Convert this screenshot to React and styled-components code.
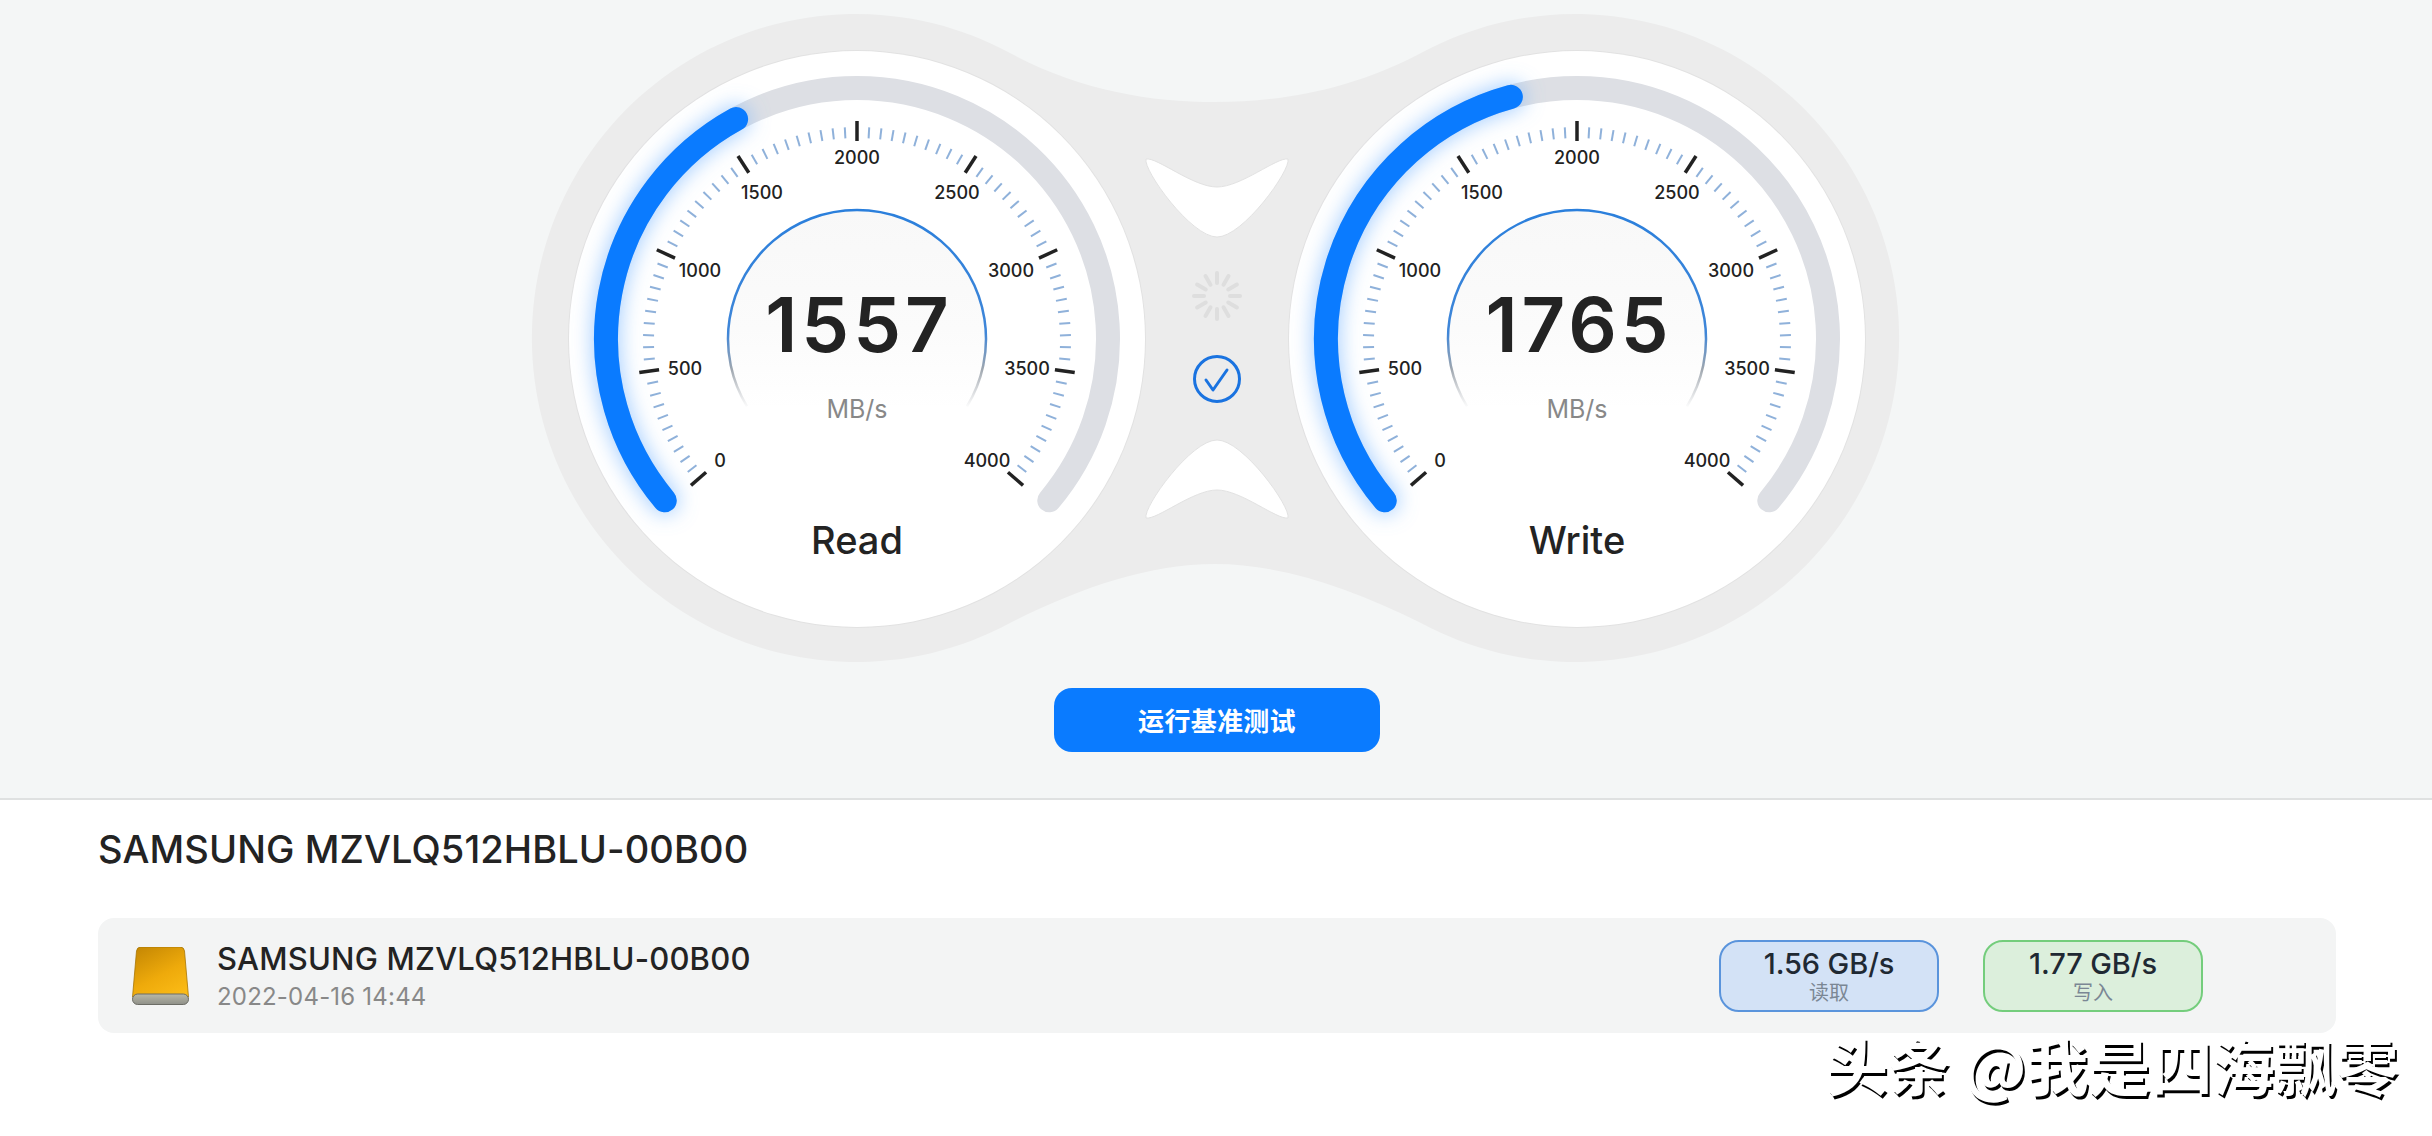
import React from 'react';
import styled, { createGlobalStyle } from 'styled-components';

const GlobalStyle = createGlobalStyle`
  html, body {
    margin: 0;
    padding: 0;
    background: #fff;
  }
  body {
    font-family: Inter, "Noto Sans CJK SC", sans-serif;
    color: #222;
  }
`;

const Page = styled.div`
  position: relative;
  width: 2432px;
  height: 1136px;
  overflow: hidden;
  background: #fff;
`;

const BenchPanel = styled.section`
  height: 800px;
  box-sizing: border-box;
  padding-top: 14px;
  background: #f4f6f6;
  border-bottom: 2px solid #dfe1e1;
  display: flex;
  flex-direction: column;
  align-items: center;
`;

const Stage = styled.div`
  position: relative;
  width: 1366px;
  height: 648px;
  box-sizing: border-box;
  padding: 37px 36px 0;
  display: grid;
  grid-template-columns: 576px 1fr 576px;
  align-items: start;
`;

const Backdrop = styled.svg`
  position: absolute;
  left: 0;
  top: 0;
  overflow: visible;
`;

const GaugeFace = styled.div`
  position: relative;
  width: 576px;
  height: 576px;
  box-sizing: border-box;
  border-radius: 50%;
  background: #fff;
  box-shadow: 0 0 0 1px #e2e2e2;
`;

const GaugeArt = styled.svg`
  display: block;
  width: 576px;
  height: 576px;
`;

const TickLabel = styled.text`
  font-family: Inter, sans-serif;
  font-size: 18px;
  font-weight: 500;
  fill: #222;
  text-anchor: middle;
  dominant-baseline: central;
`;

const Readout = styled.div`
  position: absolute;
  inset: 0;
  display: flex;
  flex-direction: column;
  align-items: center;
  padding-top: 236px;
`;

const Value = styled.div`
  padding-left: 4px;
  font-size: 76px;
  line-height: 74px;
  font-weight: 600;
  letter-spacing: 4px;
  color: #232323;
`;

const Unit = styled.div`
  margin-top: 33px;
  font-size: 25px;
  line-height: 30px;
  color: #888;
`;

const GaugeTitle = styled.div`
  margin-top: 93px;
  font-size: 38px;
  line-height: 46px;
  font-weight: 500;
  color: #232323;
`;

const Middle = styled.div`
  position: relative;
  display: flex;
  flex-direction: column;
  align-items: center;
  padding-top: 107px;
`;

const Notch = styled.svg`
  display: block;
`;

const Spinner = styled.svg`
  display: block;
  margin-top: 32px;
`;

const CheckMark = styled.svg`
  display: block;
  margin-top: 33px;
`;

const LowerNotch = styled(Notch)`
  margin-top: 36px;
`;

const RunButton = styled.button`
  margin: 26px 0 0 2px;
  width: 326px;
  height: 64px;
  padding: 0 0 2px;
  border: 0;
  border-radius: 18px;
  background: #0a7bff;
  color: #fff;
  font-family: "Noto Sans CJK SC", sans-serif;
  font-size: 26px;
  font-weight: 700;
  letter-spacing: 0.3px;
`;

const DriveSection = styled.section`
  padding: 26px 96px 0 98px;
`;

const DriveHeading = styled.h1`
  margin: 0;
  font-size: 38px;
  line-height: 46px;
  font-weight: 500;
  letter-spacing: 0.1px;
  color: #232323;
`;

const ResultRow = styled.div`
  margin-top: 46px;
  height: 115px;
  box-sizing: border-box;
  padding: 0 133px 0 34px;
  display: flex;
  align-items: center;
  background: #f3f4f4;
  border-radius: 16px;
`;

const DriveMeta = styled.div`
  margin-left: 28px;
  flex: 1;
`;

const DriveName = styled.div`
  font-size: 31px;
  line-height: 38px;
  font-weight: 500;
  letter-spacing: 0.2px;
  color: #232323;
`;

const DriveDate = styled.div`
  margin-top: 5px;
  font-size: 24px;
  line-height: 28px;
  letter-spacing: 0.2px;
  color: #888;
`;

const SpeedPill = styled.div`
  width: 220px;
  height: 72px;
  box-sizing: border-box;
  margin-left: ${({ $gap }) => $gap}px;
  padding-top: 6px;
  border: 2px solid ${({ $line }) => $line};
  border-radius: 20px;
  background: ${({ $fill }) => $fill};
  display: flex;
  flex-direction: column;
  align-items: center;
`;

const PillValue = styled.div`
  font-size: 29px;
  line-height: 32px;
  font-weight: 500;
  letter-spacing: -0.1px;
  color: #1f2933;
`;

const PillLabel = styled.div`
  margin-top: 1px;
  font-family: "Noto Sans CJK SC", sans-serif;
  font-size: 20px;
  line-height: 22px;
  color: #7b8794;
`;

const Watermark = styled.div`
  position: absolute;
  left: 1826px;
  top: 1029px;
  font-family: "Noto Sans CJK SC", sans-serif;
  font-size: 62px;
  font-weight: 700;
  line-height: 70px;
  white-space: nowrap;
  color: #fff;
  text-shadow: 2px 3px 0 #000;
`;

const SCALE = [
  { label: '0', x: -137, y: 121 },
  { label: '500', x: -172, y: 29 },
  { label: '1000', x: -157, y: -69 },
  { label: '1500', x: -95, y: -147 },
  { label: '2000', x: 0, y: -182 },
  { label: '2500', x: 100, y: -147 },
  { label: '3000', x: 154, y: -69 },
  { label: '3500', x: 170, y: 29 },
  { label: '4000', x: 130, y: 121 },
];

const polar = (r, deg) => {
  const a = (deg * Math.PI) / 180;
  return [r * Math.sin(a), -r * Math.cos(a)];
};

const arc = (r, from, to) => {
  const [x1, y1] = polar(r, from);
  const [x2, y2] = polar(r, to);
  const large = to - from > 180 ? 1 : 0;
  return `M ${x1} ${y1} A ${r} ${r} 0 ${large} 1 ${x2} ${y2}`;
};

const valueAngle = (v) => -130 + (v / 4000) * 260;

// the tick ring sits a little lower than the arc in the reference
const Ticks = () => {
  const out = [];
  for (let i = 0; i <= 80; i++) {
    const major = i % 10 === 0;
    const deg = -131 + i * 3.275;
    const [x1, y1] = polar(major ? 220 : 214, deg);
    const [x2, y2] = polar(major ? 200 : 203, deg);
    out.push(
      <line
        key={i}
        x1={x1}
        y1={y1 + 2}
        x2={x2}
        y2={y2 + 2}
        stroke={major ? '#222' : '#8fb1da'}
        strokeWidth={major ? 3.5 : 2}
      />
    );
  }
  return out;
};

const Gauge = ({ id, title, value }) => (
  <GaugeFace>
    <GaugeArt viewBox="-288 -288 576 576">
      <defs>
        <filter id={`${id}-glow`} x="-30%" y="-30%" width="160%" height="160%">
          <feGaussianBlur stdDeviation="10" />
        </filter>
        <linearGradient id={`${id}-ring`} gradientUnits="userSpaceOnUse" x1="0" y1="-130" x2="0" y2="70">
          <stop offset="0" stopColor="#2a7fdc" />
          <stop offset="0.62" stopColor="#3f86d8" />
          <stop offset="0.8" stopColor="#9ea6af" />
          <stop offset="1" stopColor="#b5b8bc" stopOpacity="0" />
        </linearGradient>
        <linearGradient id={`${id}-well`} gradientUnits="userSpaceOnUse" x1="0" y1="-130" x2="0" y2="70">
          <stop offset="0" stopColor="#f8f8f8" />
          <stop offset="0.6" stopColor="#fbfbfb" />
          <stop offset="1" stopColor="#ffffff" />
        </linearGradient>
      </defs>
      <path d={arc(251, -130, 130)} fill="none" stroke="#dddfe4" strokeWidth="24" strokeLinecap="round" />
      <path
        d={arc(251, -130, valueAngle(value))}
        fill="none"
        stroke="#6eb0ff"
        strokeOpacity="0.6"
        strokeWidth="28"
        strokeLinecap="round"
        filter={`url(#${id}-glow)`}
      />
      <path d={arc(251, -130, valueAngle(value))} fill="none" stroke="#0a7bff" strokeWidth="24" strokeLinecap="round" />
      <Ticks />
      <path d={arc(129, -121.5, 121.5)} fill={`url(#${id}-well)`} stroke={`url(#${id}-ring)`} strokeWidth="2.5" />
      {SCALE.map((s) => (
        <TickLabel key={s.label} x={s.x} y={s.y}>
          {s.label}
        </TickLabel>
      ))}
    </GaugeArt>
    <Readout>
      <Value>{value}</Value>
      <Unit>MB/s</Unit>
      <GaugeTitle>{title}</GaugeTitle>
    </Readout>
  </GaugeFace>
);

const BusySpinner = () => (
  <Spinner width="52" height="52" viewBox="-26 -26 52 52">
    {Array.from({ length: 12 }, (_, i) => (
      <line
        key={i}
        x1="0"
        y1="-13"
        x2="0"
        y2="-23"
        stroke="#dedede"
        strokeWidth="4"
        strokeLinecap="round"
        transform={`rotate(${i * 30})`}
      />
    ))}
  </Spinner>
);

const DriveIcon = () => (
  <svg width="57" height="58" viewBox="0 0 57 58">
    <defs>
      <linearGradient id="driveBody" x1="0.2" y1="0" x2="0.8" y2="1">
        <stop offset="0" stopColor="#c88a04" />
        <stop offset="0.55" stopColor="#eeaa0b" />
        <stop offset="1" stopColor="#fbbb16" />
      </linearGradient>
      <linearGradient id="driveBase" x1="0" y1="0" x2="0" y2="1">
        <stop offset="0" stopColor="#b9b9a8" />
        <stop offset="1" stopColor="#8f9089" />
      </linearGradient>
    </defs>
    <path d="M9 0 H48 Q52 0 52.5 4 L56.5 50 H0.5 L4.5 4 Q5 0 9 0 Z" fill="url(#driveBody)" stroke="#a87604" strokeWidth="0.8" />
    <rect x="0.5" y="47" width="56" height="10.5" rx="5.2" fill="url(#driveBase)" stroke="#6c6d66" strokeWidth="1" />
  </svg>
);

export default function App() {
  return (
    <Page>
      <GlobalStyle />
      <BenchPanel>
        <Stage>
          <Backdrop width="1366" height="648" viewBox="534 14 1366 648">
            <path
              d="M1011 53 C1080 90 1150 102 1216 102 C1282 102 1352 90 1422 53 A324 324 0 1 1 1422 623 C1352 588 1282 564 1216 564 C1150 564 1080 588 1011 623 A324 324 0 1 1 1011 53 Z"
              fill="#ececec"
            />
          </Backdrop>
          <Gauge id="read" title="Read" value={1557} />
          <Middle>
            <Notch width="144" height="80" viewBox="0 0 144 80">
              <path
                d="M1 1 C12 -1 48 29 72 29 C96 29 132 -1 143 1 C146 12 98 79 72 79 C46 79 -2 12 1 1 Z"
                fill="#fff"
                stroke="#e2e2e2"
              />
            </Notch>
            <BusySpinner />
            <CheckMark width="48" height="48" viewBox="0 0 48 48">
              <circle cx="24" cy="24" r="22.5" fill="none" stroke="#1a73e0" strokeWidth="3" />
              <path d="M13 25 L20 35 L34 15" fill="none" stroke="#1a73e0" strokeWidth="3" strokeLinecap="round" strokeLinejoin="round" />
            </CheckMark>
            <LowerNotch width="144" height="80" viewBox="0 0 144 80">
              <path
                d="M1 79 C12 81 48 51 72 51 C96 51 132 81 143 79 C146 68 98 1 72 1 C46 1 -2 68 1 79 Z"
                fill="#fff"
                stroke="#e2e2e2"
              />
            </LowerNotch>
          </Middle>
          <Gauge id="write" title="Write" value={1765} />
        </Stage>
        <RunButton>运行基准测试</RunButton>
      </BenchPanel>
      <DriveSection>
        <DriveHeading>SAMSUNG MZVLQ512HBLU-00B00</DriveHeading>
        <ResultRow>
          <DriveIcon />
          <DriveMeta>
            <DriveName>SAMSUNG MZVLQ512HBLU-00B00</DriveName>
            <DriveDate>2022-04-16 14:44</DriveDate>
          </DriveMeta>
          <SpeedPill $gap={0} $line="#5a94dc" $fill="#d3e2f6">
            <PillValue>1.56 GB/s</PillValue>
            <PillLabel>读取</PillLabel>
          </SpeedPill>
          <SpeedPill $gap={44} $line="#74cd7c" $fill="#dcefdc">
            <PillValue>1.77 GB/s</PillValue>
            <PillLabel>写入</PillLabel>
          </SpeedPill>
        </ResultRow>
      </DriveSection>
      <Watermark>头条 @我是四海飘零</Watermark>
    </Page>
  );
}
